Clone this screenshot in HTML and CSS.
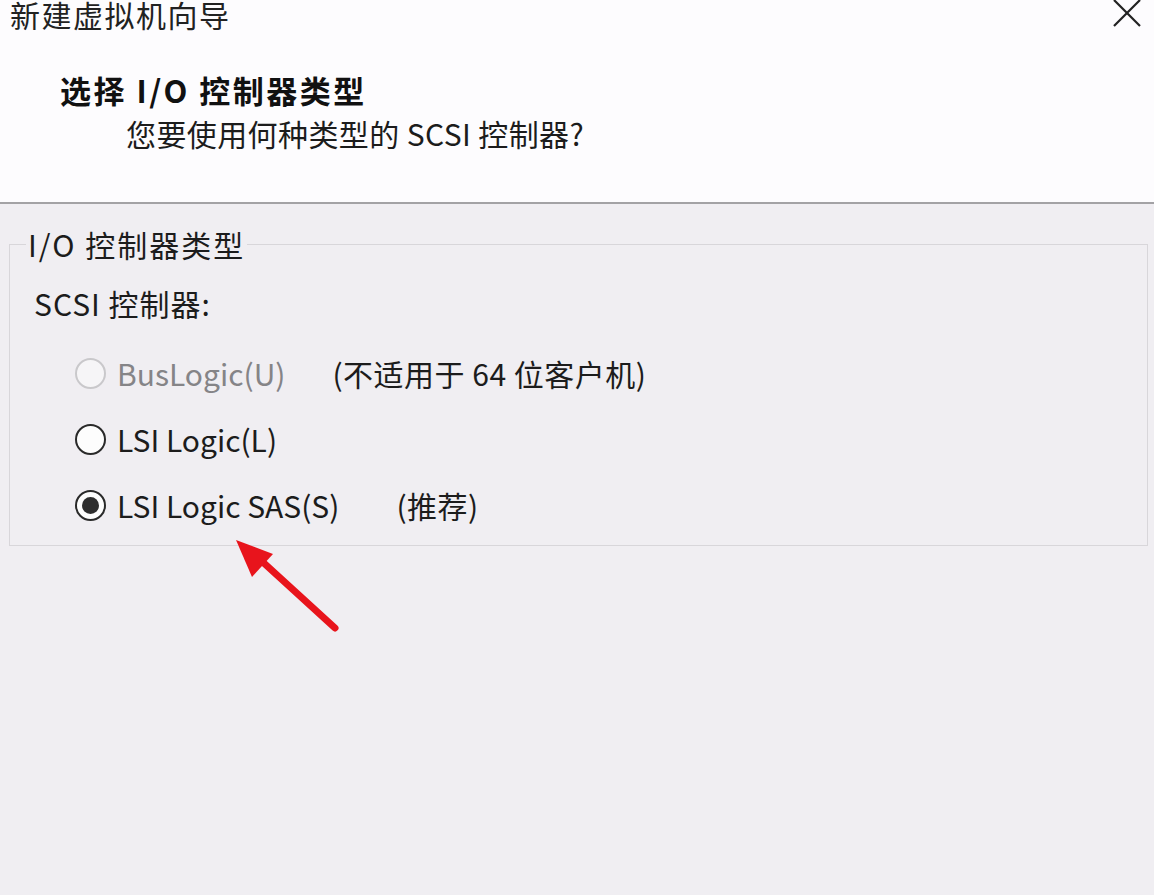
FILE: index.html
```html
<!DOCTYPE html>
<html lang="zh-CN">
<head>
<meta charset="utf-8">
<title>新建虚拟机向导</title>
<link rel="stylesheet" href="styles.css">
</head>
<body>
<div class="window">
  <div class="header">
    <div class="titlebar">
      <span class="title">新建虚拟机向导</span>
      <svg class="close" width="28" height="28" viewBox="0 0 28 28"><path d="M1 0 L27 26 M27 0 L1 26" stroke="#222" stroke-width="2.2" fill="none"/></svg>
    </div>
    <div class="heading">选择 I/O 控制器类型</div>
    <div class="subheading">您要使用何种类型的 SCSI 控制器?</div>
  </div>
  <div class="content">
    <fieldset class="group">
      <legend class="legend">I/O 控制器类型</legend>
      <div class="label">SCSI 控制器:</div>
      <div class="options">
        <div class="option disabled">
          <span class="radio"></span><span class="name">BusLogic(U)</span><span class="note note-na">(不适用于 64 位客户机)</span>
        </div>
        <div class="option">
          <span class="radio"></span><span class="name">LSI Logic(L)</span>
        </div>
        <div class="option">
          <span class="radio checked"></span><span class="name">LSI Logic SAS(S)</span><span class="note note-rec">(推荐)</span>
        </div>
      </div>
    </fieldset>
    <svg class="arrow" width="120" height="110" viewBox="0 0 120 110">
      <line x1="111" y1="101" x2="30" y2="27" stroke="#e8141c" stroke-width="7" stroke-linecap="round"/>
      <polygon points="12,13 49,27 28,50" fill="#e8141c"/>
    </svg>
  </div>
</div>
</body>
</html>
```

FILE: styles.css
```css
html, body {
  margin: 0;
  padding: 0;
}
body {
  width: 1154px;
  height: 895px;
  overflow: hidden;
  background: #f0eef2;
  font-family: "Noto Sans CJK SC", "Noto Sans", sans-serif;
  color: #1c1c1c;
}
.window {
  width: 1154px;
  height: 895px;
  display: flex;
  flex-direction: column;
}
.header {
  background: #fdfcfe;
  height: 202px;
  border-bottom: 2px solid #a3a2a5;
  box-sizing: content-box;
}
.titlebar {
  display: flex;
  justify-content: space-between;
  align-items: flex-start;
  height: 40px;
}
.title {
  font-size: 30px;
  line-height: 28px;
  margin-top: 0;
  margin-left: 10px;
  letter-spacing: 1.5px;
  color: #222;
}
.close {
  margin-right: 13px;
  margin-top: 0;
}
.heading {
  font-size: 31px;
  font-weight: 700;
  line-height: 40px;
  margin-top: 30px;
  margin-left: 60px;
  letter-spacing: 2.5px;
  color: #111;
}
.subheading {
  font-size: 30px;
  line-height: 40px;
  margin-top: 3px;
  margin-left: 126px;
  letter-spacing: 0.4px;
}
.content {
  position: relative;
  flex: 1;
  padding: 22px 6px 0 9px;
}
.group {
  margin: 0;
  padding: 0 0 20px 0;
  border: 1px solid #d8d6da;
  min-width: 0;
}
.legend {
  font-size: 30px;
  line-height: 36px;
  margin-left: 16px;
  padding: 0 2px;
  letter-spacing: 2px;
}
.label {
  font-size: 30px;
  line-height: 40px;
  margin-top: 21px;
  margin-left: 24px;
  letter-spacing: 1px;
}
.options {
  display: flex;
  flex-direction: column;
  gap: 26px;
  margin-top: 30px;
  margin-left: 65px;
}
.option {
  display: flex;
  align-items: center;
  height: 40px;
  font-size: 30px;
}
.option .name {
  margin-left: 11px;
}
.note {
  margin-left: 54px;
  color: #1c1c1c;
  letter-spacing: 0.5px;
}
.note-na {
  margin-left: 47px;
}
.note-rec {
  margin-left: 57px;
}
.disabled .name {
  color: #858487;
}
.radio {
  width: 31px;
  height: 31px;
  box-sizing: border-box;
  border: 2px solid #2a2a2a;
  border-radius: 50%;
  background: #fdfdfd;
  display: flex;
  align-items: center;
  justify-content: center;
  flex: none;
}
.disabled .radio {
  border-color: #c9c8cb;
  background: #f6f5f7;
}
.radio.checked::after {
  content: "";
  width: 17px;
  height: 17px;
  border-radius: 50%;
  background: #2e2e2e;
}
.arrow {
  position: absolute;
  left: 224px;
  top: 323px;
}
```
